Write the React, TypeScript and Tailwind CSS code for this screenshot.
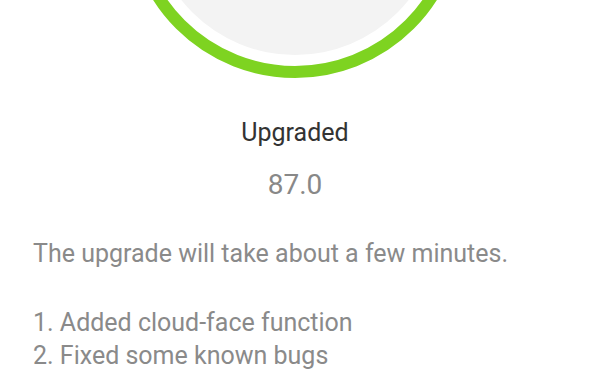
import React from "react";

export default function App() {
  return (
    <div className="w-[590px] h-[389px] overflow-hidden bg-white" style={{ fontFamily: "Roboto, 'Noto Sans', sans-serif" }}>
      <div className="flex flex-col items-center">
        <div className="mt-[-258px] w-[336px] h-[336px] rounded-full border-[12px] border-[#7ed321] flex items-center justify-center">
          <div className="w-[290px] h-[290px] rounded-full bg-[#f3f3f3]" />
        </div>
        <div className="mt-[40px] text-[25px] leading-[30px] text-[#333333]">Upgraded</div>
        <div className="mt-[21px] text-[28px] leading-[32px] text-[#888888]">87.0</div>
      </div>
      <div className="mt-[36px] px-[33px] text-[25px] leading-[33px] text-[#8a8a8a]">
        <div>The upgrade will take about a few minutes.</div>
        <div className="h-[36px]" />
        <div>1. Added cloud-face function</div>
        <div>2. Fixed some known bugs</div>
      </div>
    </div>
  );
}
